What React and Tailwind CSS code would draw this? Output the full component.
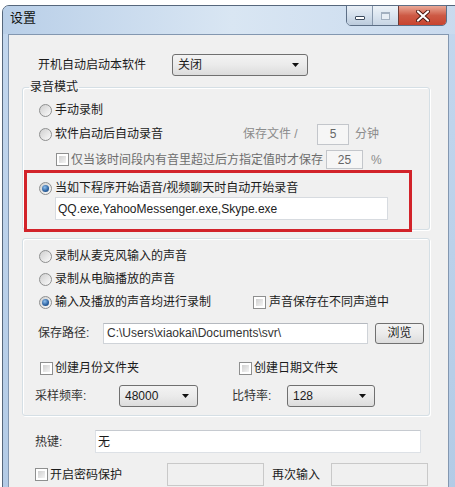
import React from "react";

/* small win7 style widgets */
function Radio({ checked }) {
  return (
    <span className="w-[13px] h-[13px] shrink-0 rounded-full border border-[#8e8f8f] bg-gradient-to-br from-[#cfcfcf] to-[#fbfbfb] flex items-center justify-center">
      {checked && (
        <span className="w-[7px] h-[7px] rounded-full bg-[radial-gradient(circle_at_40%_35%,#8fc0ee,#2a5f9e_60%,#173e6e)]" />
      )}
    </span>
  );
}

function Check() {
  return (
    <span className="w-[13px] h-[13px] shrink-0 border border-[#8e8f8f] bg-white p-[2px]">
      <span className="block w-full h-full bg-gradient-to-br from-[#d0d0d0] to-[#f4f4f4]" />
    </span>
  );
}

function Combo({ value, width }) {
  return (
    <div
      className={`h-[22px] rounded-[3px] border border-[#707070] bg-gradient-to-b from-[#f3f3f3] via-[#ebebeb] to-[#dcdcdc] flex items-center pl-[5px] pr-[8px] ${width}`}
    >
      <span className="flex-1 leading-[14px] text-[#1b1b1b]">{value}</span>
      <svg width="7" height="4" viewBox="0 0 7 4">
        <path d="M0 0h7L3.5 4z" fill="#111" />
      </svg>
    </div>
  );
}

export default function App() {
  return (
    <div className="w-[455px] h-[487px] overflow-hidden bg-white font-['Liberation_Sans','Noto_Sans_CJK_SC',sans-serif] text-[12px] text-[#1b1b1b]">
      {/* ===== WINDOW FRAME ===== */}
      <div className="ml-[2px] mt-[5px] w-[460px] h-[490px] rounded-t-[7px] border border-[#56677c] bg-gradient-to-b from-[#c3d7ee] to-[#b3cbe6] flex flex-col">
        {/* title bar */}
        <div className="h-[28px] flex items-start bg-gradient-to-r from-[#b9cfe8] via-[#d9e6f3] to-[#c9daee] rounded-t-[6px]">
          <span className="ml-[7px] mt-[4px] w-[26px] text-[13px] leading-[16px] text-[#111]">设置</span>
          <div className="ml-[310px] -mt-[1px] flex h-[21px] rounded-b-[5px] border border-[#5d6f86] overflow-hidden">
            <div className="w-[26px] bg-gradient-to-b from-[#e9eff6] via-[#d3dfec] to-[#bccbdc] flex items-center justify-center border-r border-[#8797ab]">
              <span className="mt-[5px] w-[10px] h-[4px] bg-white border border-[#3c4b5e] rounded-[1px]" />
            </div>
            <div className="w-[26px] bg-gradient-to-b from-[#eef3f8] via-[#dbe5f0] to-[#c8d5e4] flex items-center justify-center border-r border-[#6c3a35]">
              <span className="w-[9px] h-[8px] border border-[#a3b0c0] border-t-2 bg-[#e8eef5]" />
            </div>
            <div className="w-[47px] bg-gradient-to-b from-[#e9a897] via-[#cd5a45] to-[#c8432e] flex items-center justify-center">
              <svg width="14" height="12" viewBox="0 0 14 12">
                <path d="M2 1.5L12 10.5M12 1.5L2 10.5" stroke="#4b1810" strokeWidth="4" strokeLinecap="round" />
                <path d="M2 1.5L12 10.5M12 1.5L2 10.5" stroke="#fff" strokeWidth="2.2" strokeLinecap="round" />
              </svg>
            </div>
          </div>
        </div>

        {/* ===== CLIENT AREA ===== */}
        <div className="ml-[5px] w-[441px] flex-1 border border-[#8397b0] bg-[#f0f0f0]">
          {/* auto start */}
          <div className="mt-[19px] ml-[29px] h-[21px] flex items-center">
            <span className="w-[134px] leading-[14px]">开机自动启动本软件</span>
            <Combo value="关闭" width="w-[136px]" />
          </div>

          {/* recording mode group */}
          <fieldset className="mt-[5px] ml-[13px] w-[408px] rounded-[3px] border border-[#d5dfe5] shadow-[inset_1px_1px_0_#fff,1px_1px_0_#fff]">
            <legend className="ml-[6px] px-[1px] leading-[14px]">录音模式</legend>

            <div className="mt-[5px] pl-[16px] h-[22px] flex items-center gap-[3px]">
              <Radio />
              <span className="leading-[14px]">手动录制</span>
            </div>

            <div className="mt-[2px] pl-[16px] h-[22px] flex items-center gap-[3px]">
              <Radio />
              <span className="w-[185px] leading-[14px]">软件启动后自动录音</span>
              <span className="w-[71px] leading-[14px] text-[#8c8c8c]">保存文件 /</span>
              <div className="w-[32px] h-[21px] border border-[#c3c6cb] bg-[#f6f6f6] flex items-center justify-center text-[#666]">5</div>
              <span className="ml-[3px] leading-[14px] text-[#8c8c8c]">分钟</span>
            </div>

            <div className="mt-[5px] pl-[33px] h-[19px] flex items-center gap-[2px]">
              <Check />
              <span className="w-[253px] leading-[14px] text-[#6d6d6d]">仅当该时间段内有音里超过后方指定值时才保存</span>
              <div className="w-[37px] h-[19px] border border-[#c3c6cb] bg-[#f6f6f6] flex items-center justify-center text-[#666]">25</div>
              <span className="ml-[6px] leading-[14px] text-[#8c8c8c]">%</span>
            </div>

            {/* highlighted option */}
            <div className="relative mt-[1px] ml-[1px] -mb-[3px] w-[388px] border-[3px] border-[#d2232a] pt-[8px] pb-[9px]">
              <div className="pl-[12px] h-[14px] flex items-center gap-[3px]">
                <Radio checked />
                <span className="leading-[14px]">当如下程序开始语音/视频聊天时自动开始录音</span>
              </div>
              <div className="mt-[2px] ml-[28px] w-[333px] h-[23px] border border-[#d7dbe0] bg-white flex items-center pl-[2px] text-[#222]">
                QQ.exe,YahooMessenger.exe,Skype.exe
              </div>
            </div>
          </fieldset>

          {/* source group */}
          <fieldset className="mt-[8px] ml-[13px] w-[408px] rounded-[3px] border border-[#d5dfe5] shadow-[inset_1px_1px_0_#fff,1px_1px_0_#fff] pb-[8px]">
            <div className="mt-[6px] pl-[16px] h-[22px] flex items-center gap-[3px]">
              <Radio />
              <span className="leading-[14px]">录制从麦克风输入的声音</span>
            </div>
            <div className="mt-[1px] pl-[16px] h-[22px] flex items-center gap-[3px]">
              <Radio />
              <span className="leading-[14px]">录制从电脑播放的声音</span>
            </div>
            <div className="mt-[1px] pl-[16px] h-[22px] flex items-center gap-[3px]">
              <Radio checked />
              <span className="w-[195px] leading-[14px]">输入及播放的声音均进行录制</span>
              <Check />
              <span className="leading-[14px]">声音保存在不同声道中</span>
            </div>

            <div className="mt-[9px] pl-[15px] h-[22px] flex items-center">
              <span className="w-[65px] leading-[14px] text-[#333]">保存路径:</span>
              <div className="w-[265px] h-[21px] border border-[#cfd3d8] border-t-[#b5b9bf] bg-white flex items-center pl-[3px] text-[#333]">
                {"C:\\Users\\xiaokai\\Documents\\svr\\"}
              </div>
              <div className="ml-[7px] w-[49px] h-[21px] rounded-[3px] border border-[#707070] bg-gradient-to-b from-[#f3f3f3] via-[#ebebeb] to-[#dcdcdc] flex items-center justify-center leading-[14px]">
                浏览
              </div>
            </div>

            <div className="mt-[16px] pl-[17px] h-[16px] flex items-center gap-[2px]">
              <Check />
              <span className="w-[182px] leading-[14px]">创建月份文件夹</span>
              <Check />
              <span className="leading-[14px]">创建日期文件夹</span>
            </div>

            <div className="mt-[9px] pl-[12px] h-[22px] flex items-center">
              <span className="w-[84px] leading-[14px] text-[#333]">采样频率:</span>
              <Combo value="48000" width="w-[79px]" />
              <span className="ml-[34px] w-[55px] leading-[14px] text-[#333]">比特率:</span>
              <Combo value="128" width="w-[88px]" />
            </div>
          </fieldset>

          {/* hotkey */}
          <div className="mt-[14px] ml-[26px] h-[23px] flex items-center">
            <span className="w-[60px] leading-[14px] text-[#333]">热键:</span>
            <div className="w-[326px] h-[23px] border border-[#dde1e6] border-t-[#c6cad0] bg-white flex items-center pl-[2px]">
              无
            </div>
          </div>

          {/* password */}
          <div className="mt-[10px] ml-[26px] h-[23px] flex items-center">
            <Check />
            <span className="ml-[2px] w-[117px] leading-[14px]">开启密码保护</span>
            <div className="w-[97px] h-[23px] border border-[#c9c9c9] bg-[#f0f0f0]" />
            <span className="ml-[8px] w-[59px] leading-[14px]">再次输入</span>
            <div className="w-[97px] h-[23px] border border-[#c9c9c9] bg-[#f0f0f0]" />
          </div>
        </div>
      </div>
    </div>
  );
}
